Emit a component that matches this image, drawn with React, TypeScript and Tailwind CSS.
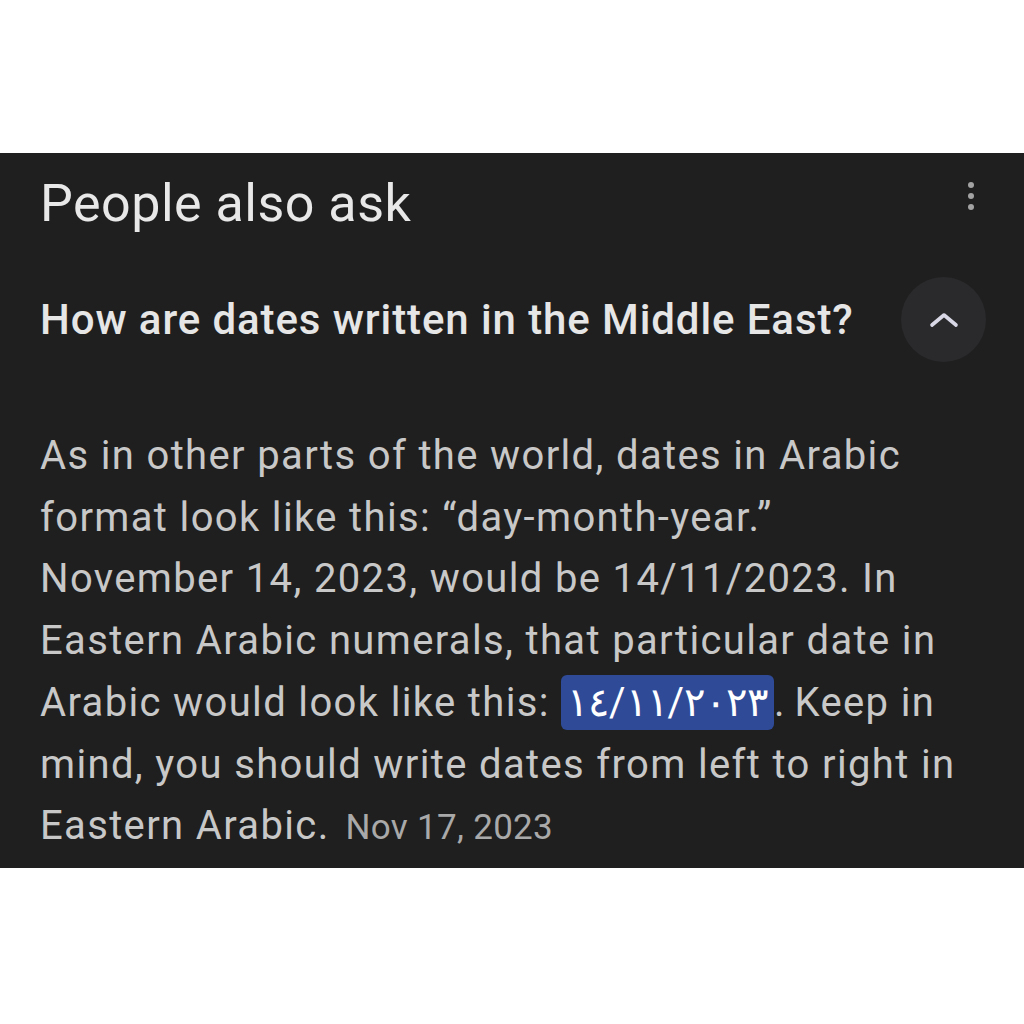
function App() {
  return (
    <div className="w-[1024px] h-[1024px] bg-white flex flex-col" style={{ fontFamily: 'Roboto, "Noto Sans", sans-serif' }}>
      <div className="h-[153px] shrink-0" />
      <div className="h-[715px] shrink-0 bg-[#1f1f1f] px-[40px]">
        <div className="flex items-start justify-between pt-[21px]">
          <h2 className="text-[52px] leading-[60px] text-[#e8e8e8] tracking-[0.5px]">People also ask</h2>
          <div className="flex flex-col items-center gap-[5px] pt-[8px] mr-[10px]">
            <span className="w-[6px] h-[6px] rounded-full bg-[#a3a3a3]" />
            <span className="w-[6px] h-[6px] rounded-full bg-[#a3a3a3]" />
            <span className="w-[6px] h-[6px] rounded-full bg-[#a3a3a3]" />
          </div>
        </div>
        <div className="flex items-center justify-between mt-[43px]">
          <div className="text-[42px] leading-[50px] font-medium text-[#e6e6e6] tracking-[0.9px]">
            How are dates written in the Middle East?
          </div>
          <button className="w-[85px] h-[85px] rounded-full bg-[#2a2a2d] flex items-center justify-center mr-[-2px]">
            <svg width="30" height="16" viewBox="0 0 30 16" fill="none">
              <polyline
                points="3,13 15,3 27,13"
                stroke="#d8d8e6"
                strokeWidth="3.6"
                strokeLinecap="round"
                strokeLinejoin="round"
              />
            </svg>
          </button>
        </div>
        <p className="mt-[63px] text-[40px] leading-[61.7px] text-[#c8c8c8] tracking-[1.35px]">
          As in other parts of the world, dates in Arabic
          <br />
          format look like this: “day-month-year.”
          <br />
          November 14, 2023, would be 14/11/2023. In
          <br />
          Eastern Arabic numerals, that particular date in
          <br />
          Arabic would look like this:{' '}
          <span className="bg-[#2f4b98] text-white rounded-[6px] px-[6px] py-[4px] tracking-[2px]" dir="ltr">
            ١٤/١١/٢٠٢٣
          </span>
          . Keep in
          <br />
          mind, you should write dates from left to right in
          <br />
          Eastern Arabic.
          <span className="ml-[16px] text-[35px] tracking-[0.3px] text-[#a9a9a9]">Nov 17, 2023</span>
        </p>
      </div>
      <div className="flex-1" />
    </div>
  );
}

export default App;
